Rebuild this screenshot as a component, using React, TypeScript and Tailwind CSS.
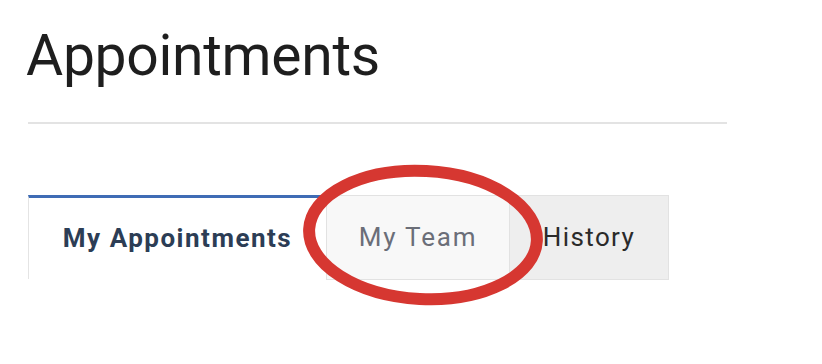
import { useState } from "react";

const tabs = ["My Appointments", "My Team", "History"];

const Appointments = () => {
    const [active] = useState(0);

    return (
        <div className="w-[822px] h-[364px] bg-white overflow-hidden font-['Roboto',sans-serif]">
            <div className="pl-[28px] pt-[22px]">
                <h1 className="-ml-[2px] text-[57px] leading-[68px] text-[#1e1e1e] tracking-[-0.3px]">Appointments</h1>
                <div className="w-[699px] h-[2px] bg-[#e3e3e3] mt-[32px]"></div>

                <div className="relative mt-[71px] flex">
                    <div className="w-[298px] h-[84px] bg-white border-t-[3px] border-t-[#3f6cb5] border-l border-l-[#e4e4e4] flex items-center justify-center">
                        <span className="text-[26px] font-bold tracking-[1.5px] text-[#2c3d55]">{tabs[0]}</span>
                    </div>
                    <div className="w-[184px] h-[85px] bg-[#f8f8f8] border border-[#e2e2e2] flex items-center justify-center">
                        <span className="text-[26px] tracking-[1.8px] text-[#6b6e78]">{tabs[1]}</span>
                    </div>
                    <div className="w-[159px] h-[85px] bg-[#eeeeee] border border-l-0 border-[#e2e2e2] flex items-center justify-center">
                        <span className="text-[26px] tracking-[1.4px] text-[#2a2a2a]">{tabs[2]}</span>
                    </div>

                    {/* highlight circle drawn over the second tab */}
                    <svg className="absolute left-[274px] top-[-32px] pointer-events-none" width="242" height="144" viewBox="0 0 242 144">
                        <ellipse cx="121" cy="72" rx="114" ry="64" fill="none" stroke="#d63731" strokeWidth="12" transform="rotate(3 121 72)" />
                    </svg>
                </div>
            </div>
            {active === -1 && <div />}
        </div>
    );
};

export default Appointments;
